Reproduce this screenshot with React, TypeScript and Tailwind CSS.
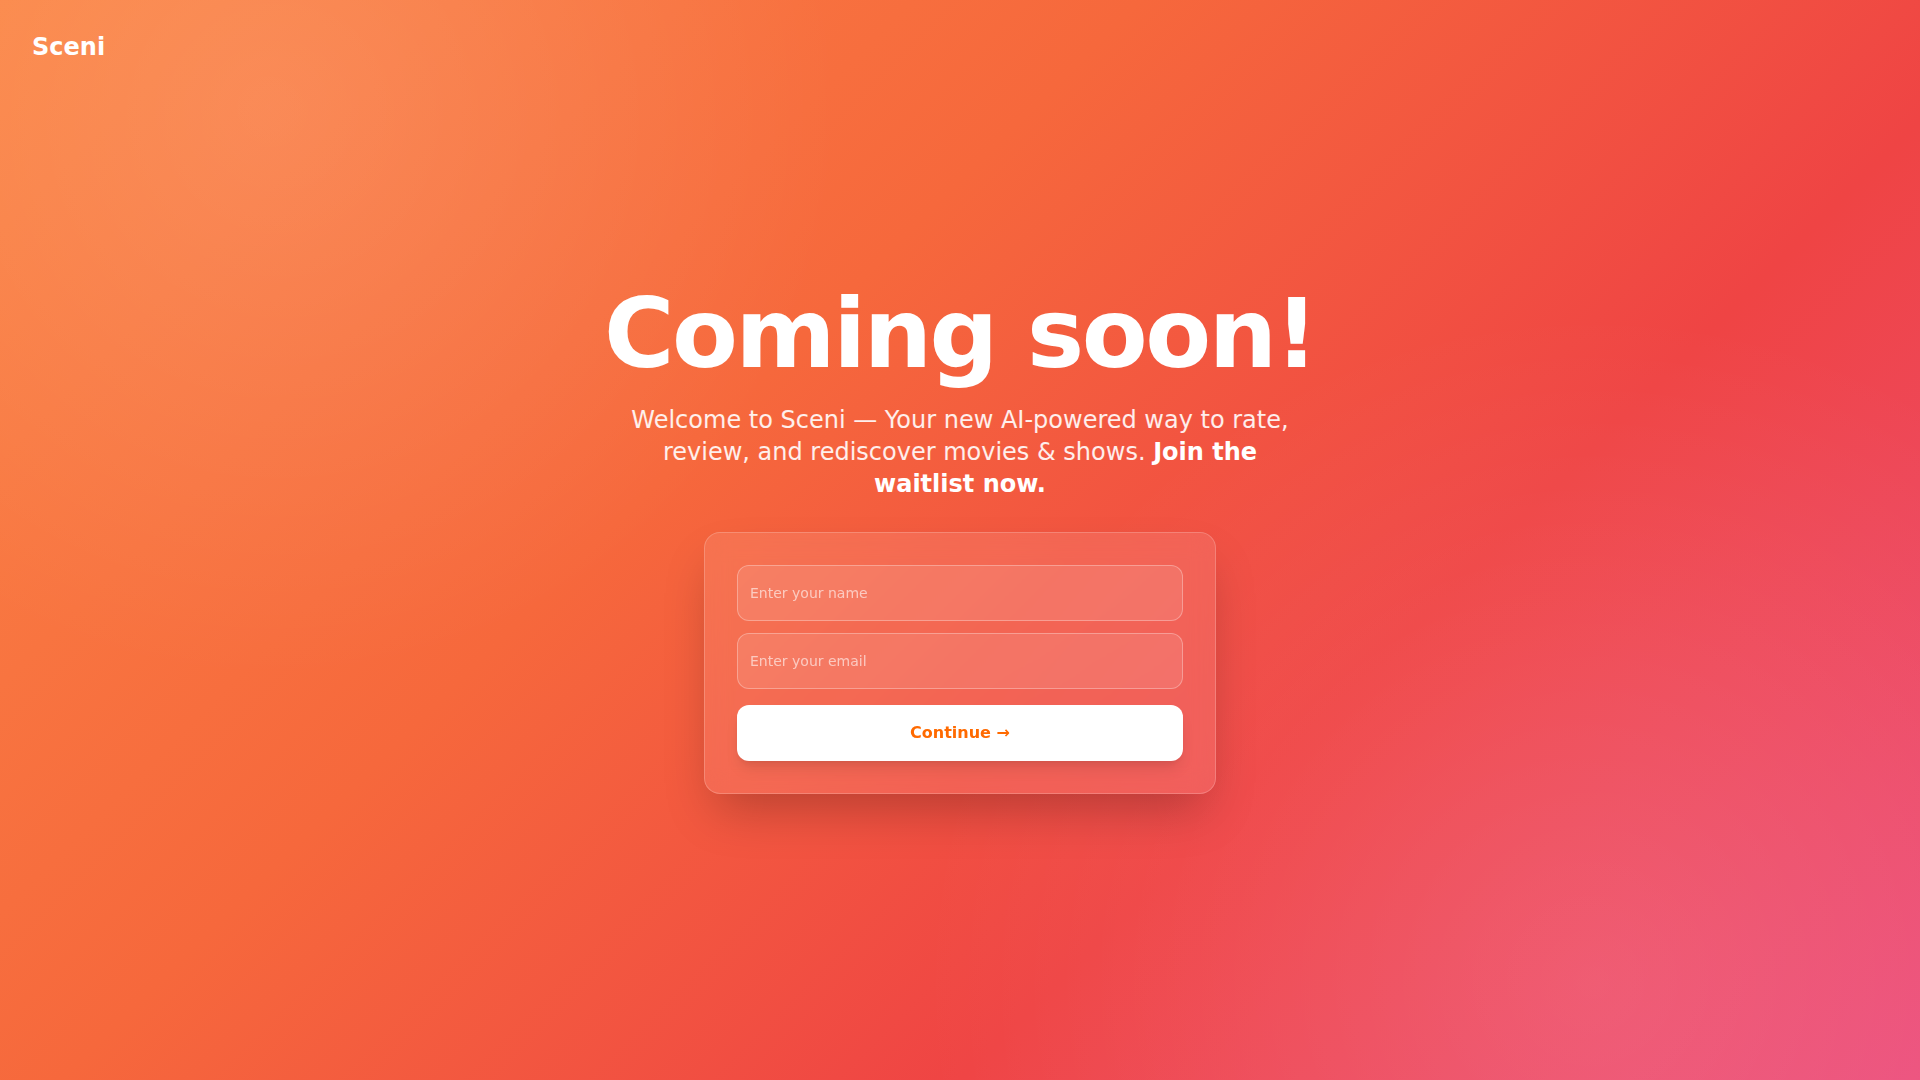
import React from 'react';

const App: React.FC = () => {
  return (
    <div
      className="min-h-screen w-full flex flex-col text-white bg-[radial-gradient(circle_at_14%_10%,rgba(255,255,255,0.11),transparent_30%),radial-gradient(circle_at_83%_91%,rgba(255,255,255,0.11),transparent_36%),linear-gradient(135deg,#fb8646_0%,#f6683c_38%,#ef4444_68%,#ec4c7a_100%)]"
      style={{ fontFamily: '"DejaVu Sans", "Noto Sans", sans-serif' }}
    >
      {/* Header */}
      <header className="px-8 pt-[31px] pb-8">
        <span className="text-2xl font-bold">Sceni</span>
      </header>

      {/* Hero */}
      <main className="flex-1 flex flex-col items-center justify-center pb-[95px] px-4">
        <h1 className="text-8xl font-bold tracking-tight leading-none text-center">
          Coming soon!
        </h1>
        <p className="mt-[22px] max-w-2xl text-center text-2xl leading-8 text-white/90">
          Welcome to Sceni — Your new AI-powered way to rate, review, and rediscover movies &amp; shows.{' '}
          <span className="font-bold text-white">Join the waitlist now.</span>
        </p>

        {/* Form card */}
        <div className="mt-8 w-full max-w-lg rounded-2xl border border-white/20 bg-white/10 p-8 shadow-2xl backdrop-blur-md">
          <form className="flex flex-col gap-3" onSubmit={(e) => e.preventDefault()}>
            <input
              type="text"
              placeholder="Enter your name"
              className="w-full h-14 rounded-xl border border-white/30 bg-white/10 px-3 text-sm text-white placeholder:text-white/60 outline-none"
            />
            <input
              type="email"
              placeholder="Enter your email"
              className="w-full h-14 rounded-xl border border-white/30 bg-white/10 px-3 text-sm text-white placeholder:text-white/60 outline-none"
            />
            <button
              type="submit"
              className="mt-1 w-full rounded-xl bg-white py-4 text-base font-bold text-[#ff6a00] shadow-lg"
            >
              Continue →
            </button>
          </form>
        </div>
      </main>
    </div>
  );
};

export default App;
